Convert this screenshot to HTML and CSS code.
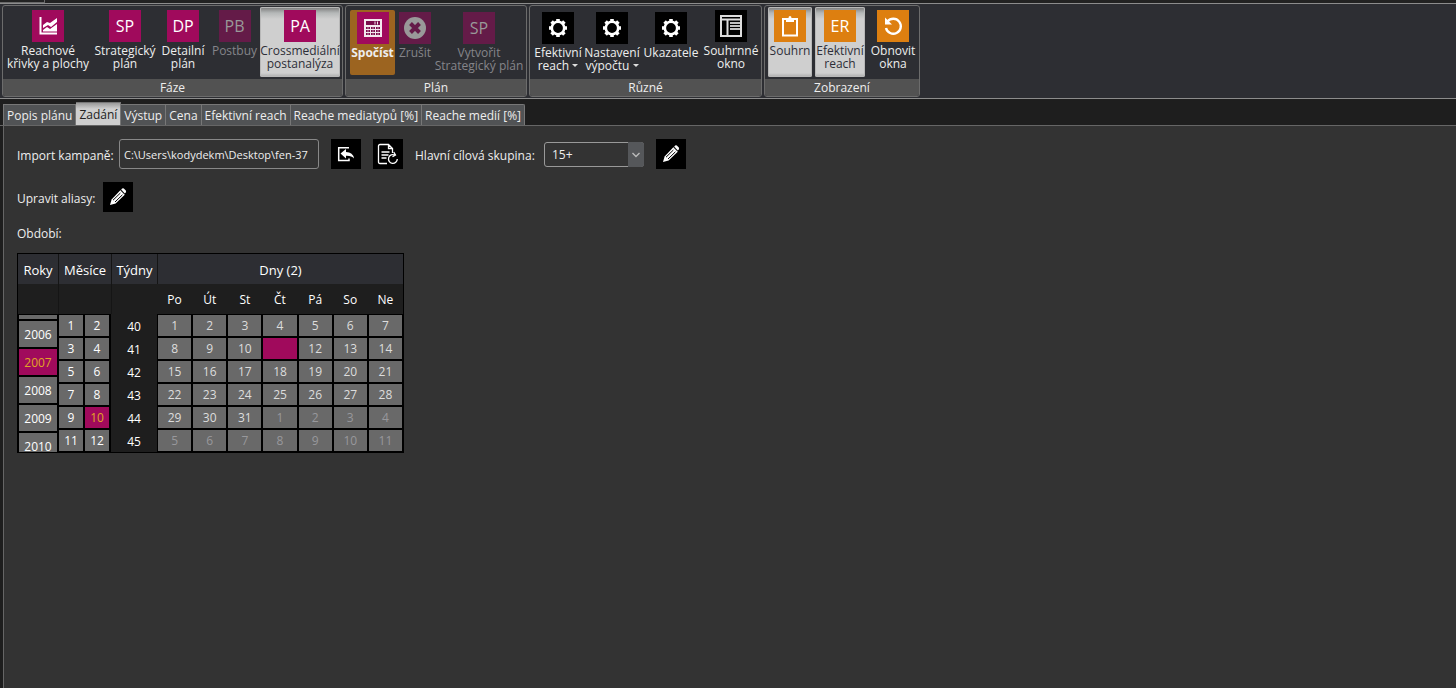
FILE: index.html
```html
<!DOCTYPE html>
<html lang="cs">
<head>
<meta charset="utf-8">
<title>Crossmediální postanalýza</title>
<link rel="stylesheet" href="styles.css">
</head>
<body>
<svg class="defs" aria-hidden="true">
  <symbol id="gear" viewBox="0 0 32 32">
    <circle cx="16" cy="16" r="6.200" fill="none" stroke="#fff" stroke-width="2.600"/>
    <g stroke="#fff" stroke-width="3.600">
      <path d="M16 7v3M16 22v3M7 16h3M22 16h3M9.600 9.600l2.200 2.200M20.200 20.200l2.200 2.200M9.600 22.400l2.200-2.200M20.200 11.800l2.200-2.200"/>
    </g>
  </symbol>
  <symbol id="pencil" viewBox="0 0 30 30">
    <path d="M7 23l1.600-5.600L17.600 8l4.400 4.400L12.600 21.400z" fill="#fff"/>
    <path d="M18.200 7.400l1-.8q.8-.6 1.600 0l2 2q.6.8 0 1.600l-1 1.200z" fill="#fff"/>
    <path d="M10 18.200l7.400-7.200M12 20l7.400-7.200" stroke="#000" stroke-width="1"/>
    <path d="M17.400 8l4.400 4.400" stroke="#000" stroke-width=".8"/>
  </symbol>
</svg>
<div class="titlebar"><span class="titlebar-tab"></span></div>
<header class="ribbon">
  <section class="group" aria-label="Fáze">
    <div class="tools tools-phase">
      <button class="tool" type="button">
        <svg class="icon magenta" viewBox="0 0 32 32"><path d="M8.500 7v16.500H25" fill="none" stroke="#fff" stroke-width="2"/><path d="M11 15l4-3 3 1 7-5v4l-6 5-3-2-5 3zM11 20l4-3 3 2 7-5v7.500H11z" fill="#fff"/></svg>
        <span>Reachové<br>křivky a plochy</span></button>
      <button class="tool" type="button"><span class="icon magenta">SP</span><span>Strategický<br>plán</span></button>
      <button class="tool" type="button"><span class="icon magenta">DP</span><span>Detailní<br>plán</span></button>
      <button class="tool" type="button" disabled><span class="icon magenta">PB</span><span>Postbuy</span></button>
      <button class="tool pressed" type="button" aria-pressed="true"><span class="icon magenta">PA</span><span>Crossmediální<br>postanalýza</span></button>
    </div>
    <div class="group-name">Fáze</div>
  </section>
  <section class="group" aria-label="Plán">
    <div class="tools tools-plan">
      <button class="tool low primary" type="button">
        <svg class="icon magenta" viewBox="0 0 32 32"><path d="M7 7h18v18H7z" fill="#f3e9ee"/><path d="M9 9h14v4H9z" fill="#7a0c4b"/><path d="M18 9.500v3M20.500 9.500v3" stroke="#f3e9ee"/><path d="M9 15h4v2H9zM14 15h4v2h-4zM19 15h4v2h-4zM9 18h4v2H9zM14 18h4v2h-4zM19 18h4v2h-4zM9 21h4v2H9zM14 21h4v2h-4zM19 21h4v2h-4z" fill="#7a0c4b"/><path d="M10 16h2M15 16h2M20 16h2M10 19h2M15 19h2M20 19h2M10 22h2M15 22h2M20 22h2" stroke="#f3e9ee" stroke-width=".6"/></svg>
        <span>Spočíst</span></button>
      <button class="tool low" type="button" disabled>
        <svg class="icon magenta" viewBox="0 0 32 32"><circle cx="16" cy="16" r="11" fill="#999"/><path d="M11.500 11.500l9 9M20.500 11.500l-9 9" stroke="#641b48" stroke-width="4"/></svg>
        <span>Zrušit</span></button>
      <button class="tool low" type="button" disabled><span class="icon magenta">SP</span><span>Vytvořit<br>Strategický plán</span></button>
    </div>
    <div class="group-name">Plán</div>
  </section>
  <section class="group" aria-label="Různé">
    <div class="tools tools-misc">
      <button class="tool low" type="button"><svg class="icon black"><use href="#gear"/></svg><span>Efektivní<br>reach <i class="caret"></i></span></button>
      <button class="tool low" type="button"><svg class="icon black"><use href="#gear"/></svg><span>Nastavení<br>výpočtu <i class="caret"></i></span></button>
      <button class="tool low" type="button"><svg class="icon black"><use href="#gear"/></svg><span>Ukazatele</span></button>
      <button class="tool" type="button">
        <svg class="icon black" viewBox="0 0 32 32"><path d="M6 6h20v20H6zM6 9.500h20M12.500 10v16" fill="none" stroke="#ddd" stroke-width="2"/><path d="M15 13h10M15 16h10M15 19h10" stroke="#fff" stroke-width="1.400"/></svg>
        <span>Souhrnné<br>okno</span></button>
    </div>
    <div class="group-name">Různé</div>
  </section>
  <section class="group" aria-label="Zobrazení">
    <div class="tools tools-view">
      <button class="tool pressed" type="button" aria-pressed="true">
        <svg class="icon orange" viewBox="0 0 32 32"><path d="M9 9h14v16.500H9z" fill="none" stroke="#fff" stroke-width="2"/><path d="M12 12V8h2.500q0-2 1.500-2t1.500 2H20v4z" fill="#fff"/></svg>
        <span>Souhrn</span></button>
      <button class="tool pressed" type="button" aria-pressed="true"><span class="icon orange">ER</span><span>Efektivní<br>reach</span></button>
      <button class="tool" type="button">
        <svg class="icon orange" viewBox="0 0 32 32"><path d="M10.500 11.500A7.500 7.500 0 1 1 9 18" fill="none" stroke="#fff" stroke-width="2.400"/><path d="M8 7.500v7h7z" fill="#fff"/></svg>
        <span>Obnovit<br>okna</span></button>
    </div>
    <div class="group-name">Zobrazení</div>
  </section>
</header>
<nav class="tabs" aria-label="Záložky">
  <button class="tab" type="button">Popis plánu</button>
  <button class="tab active" type="button">Zadání</button>
  <button class="tab" type="button">Výstup</button>
  <button class="tab" type="button">Cena</button>
  <button class="tab" type="button">Efektivní reach</button>
  <button class="tab" type="button">Reache mediatypů [%]</button>
  <button class="tab" type="button">Reache medií [%]</button>
</nav>
<main class="panel">
  <div class="row">
    <label class="label-import" for="campaign">Import kampaně:</label>
    <input class="path" id="campaign" type="text" value="C:\Users\kodydekm\Desktop\fen-37">
    <button class="square" type="button" aria-label="Importovat"><svg viewBox="0 0 30 30"><path d="M18 8.700H7.700v12.800H18v-2" fill="none" stroke="#fff" stroke-width="1.500"/><path d="M9.500 14.500l5.500-4.500v3q7 0 8 6.500-2.500-3-8-2.700v2.700z" fill="#fff"/></svg></button>
    <button class="square" type="button" aria-label="Obnovit soubor"><svg viewBox="0 0 30 30" fill="none" stroke="#fff" stroke-width="1.300"><path d="M14 24.500H7q-1.500 0-1.500-1.500V7q0-1.500 1.500-1.500h8.500l4 4V14M15.500 5.500v4h4M8.500 13h8M8.500 16h7M8.500 19h5"/><path d="M24.300 20a4.400 4.400 0 1 1-2.500-4M19.500 17.800l3-1.800-1.800-2.800"/></svg></button>
    <label class="label-target" for="target">Hlavní cílová skupina:</label>
    <span class="combo"><select id="target"><option>15+</option></select><svg viewBox="0 0 16 24"><path d="M4.500 10.500L8 14l3.500-3.500" fill="none" stroke="#bbb" stroke-width="1.400"/></svg></span>
    <button class="square" type="button" aria-label="Upravit cílovou skupinu"><svg><use href="#pencil"/></svg></button>
  </div>
  <div class="row">
    <span class="label-alias" id="alias">Upravit aliasy:</span>
    <button class="square" type="button" aria-labelledby="alias"><svg><use href="#pencil"/></svg></button>
  </div>
  <div class="period">Období:</div>
  <div class="calendar">
    <section class="years">
      <h2>Roky</h2><div class="subhead"></div>
      <div class="year-list">
        <button type="button" aria-label="2005"></button><button type="button">2006</button><button class="selected" type="button">2007</button><button type="button">2008</button><button type="button">2009</button><button type="button">2010</button>
      </div>
    </section>
    <section class="months">
      <h2>Měsíce</h2><div class="subhead"></div>
      <div class="month-grid">
        <button type="button">1</button><button type="button">2</button><button type="button">3</button><button type="button">4</button><button type="button">5</button><button type="button">6</button><button type="button">7</button><button type="button">8</button><button type="button">9</button><button class="selected" type="button">10</button><button type="button">11</button><button type="button">12</button>
      </div>
    </section>
    <section class="weeks">
      <h2>Týdny</h2><div class="subhead"></div>
      <ol><li>40</li><li>41</li><li>42</li><li>43</li><li>44</li><li>45</li></ol>
    </section>
    <section class="days">
      <h2>Dny (2)</h2>
      <table>
        <thead><tr><th>Po</th><th>Út</th><th>St</th><th>Čt</th><th>Pá</th><th>So</th><th>Ne</th></tr></thead>
        <tbody>
          <tr><td>1</td><td>2</td><td>3</td><td>4</td><td>5</td><td>6</td><td>7</td></tr>
          <tr><td>8</td><td>9</td><td>10</td><td class="selected"></td><td>12</td><td>13</td><td>14</td></tr>
          <tr><td>15</td><td>16</td><td>17</td><td>18</td><td>19</td><td>20</td><td>21</td></tr>
          <tr><td>22</td><td>23</td><td>24</td><td>25</td><td>26</td><td>27</td><td>28</td></tr>
          <tr><td>29</td><td>30</td><td>31</td><td class="other">1</td><td class="other">2</td><td class="other">3</td><td class="other">4</td></tr>
          <tr><td class="other">5</td><td class="other">6</td><td class="other">7</td><td class="other">8</td><td class="other">9</td><td class="other">10</td><td class="other">11</td></tr>
        </tbody>
      </table>
    </section>
  </div>
</main>
</body>
</html>
```
FILE: styles.css
```css
* { box-sizing: border-box; }
body {
  margin: 0;
  min-height: 100vh;
  display: flex;
  flex-direction: column;
  background: #1e1e1e;
  color: #eee;
  font: 12px/13px "Open Sans", "Noto Sans", sans-serif;
}
button, input, select { font: inherit; color: inherit; margin: 0; }
button { border: 0; padding: 0; background: none; }
.defs { display: none; }

.titlebar { height: 3px; background: #222; }
.titlebar-tab { display: block; width: 45px; height: 3px; border: solid #6a6a6a; border-width: 0 1px 1px 0; }

/* Ribbon */
.ribbon {
  display: flex;
  gap: 2px;
  padding: 1px 2px;
  background: #2d2e33;
  border: solid #8c8c8c;
  border-width: 1px 0;
}
.group { border: 1px solid #6c6c6c; border-radius: 3px; overflow: hidden; }
.tools { display: grid; height: 73px; padding-top: 1px; }
.tools-phase { grid-template-columns: 90px 64px 52px 51px 80px; padding-right: 2px; }
.tools-plan { grid-template-columns: 45px 40px 88px; padding: 1px 3px 0 4px; }
.tools-misc { grid-template-columns: 56px 52px 66px 54px; padding-right: 3px; }
.tools-view { grid-template-columns: 44px 50px 50px; column-gap: 3px; padding: 1px 1px 0 3px; }
.group-name { height: 17px; line-height: 17px; text-align: center; background: #525252; }
.tool {
  display: flex;
  flex-direction: column;
  align-items: center;
  gap: 2px;
  height: 70px;
  padding-top: 3px;
  border-radius: 2px;
  white-space: nowrap;
}
.tool.low { padding-top: 5px; }
.tool.pressed {
  color: #2d2e38;
  background: linear-gradient(#777 0, #b5b8b8 6px, #cfcfcf 12px, #cfcfcf 66px, #aaa 100%);
  box-shadow: inset 0 0 0 1px #b8b8b8;
}
.tool.primary {
  height: 65px;
  margin-top: 3px;
  padding-top: 2px;
  background: #9c6420;
  font-weight: bold;
}
.icon {
  flex: none;
  width: 32px;
  height: 32px;
  font-size: 16px;
  line-height: 32px;
  text-align: center;
  color: #fff;
}
.magenta { background: #a00a5c; }
.orange { background: #dd7f10; }
.black { background: #000; }
.tool:disabled { color: #85858a; }
.tool:disabled .icon { background: #641b48; color: #999; }
.caret {
  display: inline-block;
  border: solid transparent;
  border-width: 3px 3px 0;
  border-top-color: #ddd;
  vertical-align: 3px;
}

/* Tabs */
.tabs { display: flex; align-items: flex-end; height: 27px; padding-left: 3px; border-bottom: 1px solid #666; }
.tab {
  height: 21px;
  padding: 0 3px;
  color: #eee;
  background: #515355;
  border: solid #777;
  border-width: 1px 1px 0 0;
  white-space: nowrap;
}
.tab:first-child { border-left-width: 1px; }
.tab:last-child { border-radius: 0 2px 0 0; }
.tab.active { height: 23px; color: #222; background: linear-gradient(#999, #cfcfcf 6px); }

/* Panel */
.panel {
  flex: 1;
  display: flex;
  flex-direction: column;
  align-items: flex-start;
  gap: 13px;
  margin-left: 3px;
  padding: 13px;
  background: #333;
  border-left: 1px solid #666;
}
.row { display: flex; align-items: center; gap: 12px; white-space: nowrap; }
.label-import, .label-target, .label-alias { padding-top: 2px; }
.label-import { width: 90px; }
.label-target { width: 117px; }
.label-alias { width: 74px; }
.path {
  width: 200px;
  height: 30px;
  padding: 0 4px;
  font-size: 11px;
  background: #333;
  border: 1px solid #888;
  border-radius: 3px;
}
.square { width: 30px; height: 30px; background: #000; }
.square svg { display: block; width: 30px; height: 30px; }
.combo { position: relative; display: block; width: 100px; height: 25px; }
.combo select {
  appearance: none;
  width: 100%;
  height: 25px;
  padding: 0 7px;
  background: #333;
  border: 1px solid #999;
  border-radius: 3px;
}
.combo svg {
  position: absolute;
  right: 0;
  top: 0;
  width: 16px;
  height: 25px;
  background: #55575a;
  border-radius: 0 3px 3px 0;
  pointer-events: none;
}
.period { line-height: 15px; padding-top: 1px; margin-bottom: -1px; }

/* Calendar */
.calendar { display: grid; grid-template-columns: 40px 53px 46px 246px; border: 1px solid #000; background: #000; }
.calendar h2 {
  margin: 0;
  height: 30px;
  padding-top: 2px;
  font-size: 13px;
  font-weight: normal;
  line-height: 28px;
  text-align: center;
  color: #fff;
  background: #2d2e33;
  white-space: nowrap;
}
.calendar section + section h2, .calendar section + section .subhead { border-left: 1px solid #151515; }
.subhead { height: 30px; background: #1e1e1e; }
.calendar button { background: #696969; color: #fff; }
.calendar .selected { background: #a00a5c; color: #e0a526; }
.year-list { display: flex; flex-direction: column; gap: 2px; height: 137px; margin: 1px 1px 0; overflow: hidden; }
.year-list button { flex: none; height: 26px; }
.year-list button:first-child { height: 4px; }
.month-grid { display: grid; grid-template-columns: 24px 24px; grid-auto-rows: 21px; gap: 2px; padding: 1px 1px 0; }
.weeks { background: #1e1e1e; }
.weeks ol { list-style: none; margin: 0; padding: 0; text-align: center; color: #fff; }
.weeks li { height: 23px; line-height: 25px; }
.days table { width: 100%; border-collapse: separate; border-spacing: 0; table-layout: fixed; text-align: center; }
.days th { height: 30px; padding: 1px 0 0; font-weight: normal; color: #fff; background: #1e1e1e; }
.days td { height: 23px; padding: 0; border: 1px solid #000; background: #696969; color: #ddd; line-height: 21px; }
.days .other { color: #98989c; }
```
